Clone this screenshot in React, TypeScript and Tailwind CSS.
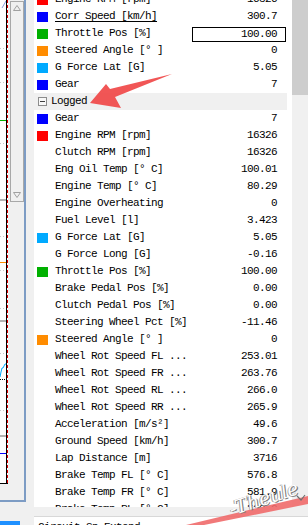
import React from "react";

type Row = {
  label: string;
  value: string;
  swatch?: string;
  edit?: boolean;
  underline?: boolean;
  header?: boolean;
};

const rows: Row[] = [
  { label: "Engine RPM [rpm]", value: "16326", swatch: "bg-[#ff0000]" },
  { label: "Corr Speed [km/h]", value: "300.7", swatch: "bg-[#0000ff]", underline: true },
  { label: "Throttle Pos [%]", value: "100.00", swatch: "bg-[#00b000]", edit: true },
  { label: "Steered Angle [° ]", value: "0", swatch: "bg-[#ff8c00]" },
  { label: "G Force Lat [G]", value: "5.05", swatch: "bg-[#00aaff]" },
  { label: "Gear", value: "7", swatch: "bg-[#0000ff]" },
  { label: "Logged", value: "", header: true },
  { label: "Gear", value: "7", swatch: "bg-[#0000ff]" },
  { label: "Engine RPM [rpm]", value: "16326", swatch: "bg-[#ff0000]" },
  { label: "Clutch RPM [rpm]", value: "16326" },
  { label: "Eng Oil Temp [° C]", value: "100.01" },
  { label: "Engine Temp [° C]", value: "80.29" },
  { label: "Engine Overheating", value: "0" },
  { label: "Fuel Level [l]", value: "3.423" },
  { label: "G Force Lat [G]", value: "5.05", swatch: "bg-[#00aaff]" },
  { label: "G Force Long [G]", value: "-0.16" },
  { label: "Throttle Pos [%]", value: "100.00", swatch: "bg-[#00b000]" },
  { label: "Brake Pedal Pos [%]", value: "0.00" },
  { label: "Clutch Pedal Pos [%]", value: "0.00" },
  { label: "Steering Wheel Pct [%]", value: "-11.46" },
  { label: "Steered Angle [° ]", value: "0", swatch: "bg-[#ff8c00]" },
  { label: "Wheel Rot Speed FL ...", value: "253.01" },
  { label: "Wheel Rot Speed FR ...", value: "263.76" },
  { label: "Wheel Rot Speed RL ...", value: "266.0" },
  { label: "Wheel Rot Speed RR ...", value: "265.9" },
  { label: "Acceleration [m/s²]", value: "49.6" },
  { label: "Ground Speed [km/h]", value: "300.7" },
  { label: "Lap Distance [m]", value: "3716" },
  { label: "Brake Temp FL [° C]", value: "576.8" },
  { label: "Brake Temp FR [° C]", value: "581.9" },
  { label: "Brake Temp RL [° C]", value: "588.2" },
];

function ChartStrip() {
  return (
    <svg width="8" height="484" className="block">
      <rect x="0" y="0" width="8" height="484" fill="#ffffff" />
      {[48, 82, 143, 236, 270, 308, 353, 410].map((y) => (
        <line key={y} x1="0" y1={y + 0.5} x2="6" y2={y + 0.5} stroke="#c8c8c8" strokeDasharray="1 2" />
      ))}
      <line x1="2" y1="8" x2="6" y2="1" stroke="#8aa0e0" />
      <line x1="0" y1="120.5" x2="6" y2="120.5" stroke="#00b000" />
      <rect x="0" y="199" width="6" height="2" fill="#b4b4b4" />
      <line x1="0" y1="262.5" x2="6" y2="262.5" stroke="#ff8c00" />
      <rect x="0" y="320" width="6" height="2" fill="#b4b4b4" />
      <polyline points="0,377 1,372 2,368 3,368 4,366 5,364 6,364" fill="none" stroke="#00aaff" />
      <line x1="0" y1="379.5" x2="6" y2="379.5" stroke="#000" strokeDasharray="1 1" />
      <rect x="0" y="435" width="6" height="2" fill="#b4b4b4" />
      <line x1="0" y1="453.5" x2="6" y2="453.5" stroke="#0000ff" />
      <line x1="6.5" y1="0" x2="6.5" y2="484" stroke="#000" />
      <line x1="7.5" y1="0" x2="7.5" y2="484" stroke="#e00000" strokeDasharray="3 2" />
      <line x1="0" y1="483.5" x2="8" y2="483.5" stroke="#000" />
    </svg>
  );
}

function VScroll() {
  return (
    <div className="mt-[1px] flex h-[201px] w-[14px] flex-col items-center justify-between border border-[#a8a8a8] bg-[#f0f0f0] py-[3px]">
      <svg width="8" height="6">
        <polygon points="4,0.5 7.5,5.5 0.5,5.5" fill="none" stroke="#a0a0a0" />
      </svg>
      <svg width="8" height="6">
        <polygon points="0.5,0.5 7.5,0.5 4,5.5" fill="none" stroke="#a0a0a0" />
      </svg>
    </div>
  );
}

function ListRow({ row }: { row: Row }) {
  if (row.header) {
    return (
      <div className="mr-[5px] flex h-[17px] items-center bg-[#f0f0f0] pl-[4px]">
        <div className="flex h-[9px] w-[9px] items-center justify-center border border-[#8c8c8c] bg-[#f8f8f8]">
          <div className="h-[1px] w-[5px] bg-[#404040]" />
        </div>
        <span className="ml-[4px]">{row.label}</span>
      </div>
    );
  }
  return (
    <div className="flex h-[17px] items-center pl-[3px] pr-[6px]">
      <div className={"h-[10px] w-[11px] shrink-0 " + (row.swatch ?? "")} />
      <span className={"ml-[7px] flex-1 whitespace-nowrap " + (row.underline ? "underline underline-offset-2" : "")}>
        {row.label}
      </span>
      {row.edit ? (
        <div className="mt-[2px] flex h-[15px] w-[94px] items-center justify-end border border-black pr-[8px]">
          {row.value}
        </div>
      ) : (
        <span className="pr-[9px]">{row.value}</span>
      )}
    </div>
  );
}

export default function App() {
  return (
    <div className="relative flex h-[525px] w-[308px] overflow-hidden bg-[#f0f0f0] font-['Liberation_Mono',monospace] text-[11px] tracking-[-0.6px] text-black">
      {/* left pane: chart + its scrollbar */}
      <div className="flex w-[34px] shrink-0 flex-col">
        <div className="flex h-[502px] w-[26px] border-b-2 border-r-2 border-[#7d9cc4]">
          <ChartStrip />
          <div className="ml-[2px]">
            <VScroll />
          </div>
        </div>
        <div className="mt-[19px] h-[4px] w-[20px] bg-[#1e90ff]" />
      </div>

      {/* right pane: channel list */}
      <div className="flex flex-1 flex-col">
        <div className="flex h-[507px]">
          <div className="flex-1 overflow-hidden bg-white">
            <div className="-mt-[9px]">
              {rows.map((r, i) => (
                <ListRow key={i} row={r} />
              ))}
            </div>
          </div>
          <div className="flex w-[16px] flex-col bg-[#f0f0f0]">
            <div className="h-[95px] bg-[#cdcdcd]" />
          </div>
        </div>
        <div className="mt-[9px] flex-1 border-t border-[#d8d8d8] bg-white pl-[4px] pt-[2px]">
          Circuit Sp Extend
        </div>
      </div>

      {/* red annotation arrow + watermark */}
      <svg className="pointer-events-none absolute left-0 top-0" width="308" height="525">
        <polygon
          points="90,103 106,84 110,89 172,74 115,97 121,108"
          fill="#f04848"
          fillOpacity="0.92"
        />
        <polygon points="186,525 308,496 308,504 204,525" fill="#f06a6a" fillOpacity="0.9" />
        <polyline points="297,496 301,500 305,495" fill="none" stroke="#707070" strokeWidth="1.2" />
      </svg>
      <span className="pointer-events-none absolute left-[228px] top-[484px] -rotate-[18deg] font-['DejaVu_Serif',serif] text-[19px] italic tracking-[0px] text-white [text-shadow:1px_1px_0_#7a7a7a,-1px_0_0_#9a9a9a]">
        -Theule
      </span>
    </div>
  );
}
